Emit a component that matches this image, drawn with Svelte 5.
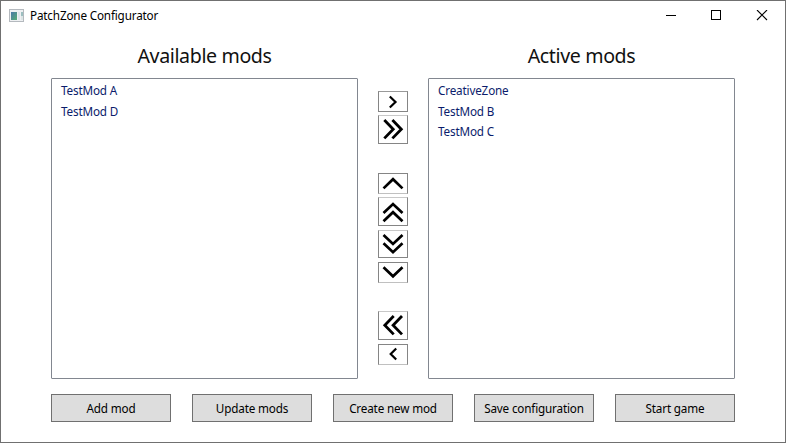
<script>
  const available = ['TestMod A', 'TestMod D'];
  const active = ['CreativeZone', 'TestMod B', 'TestMod C'];

  // Each mover: height, gap above, edge shade class, stroke width and chevron polylines
  const movers = [
    { label: 'Activate', h: 21, gap: 0, edge: 'softtop', w: 2.2, lines: ['11.8,5.5 17.5,11 11.8,16.5'] },
    { label: 'Activate all', h: 29, gap: 3, edge: 'lighttop', w: 2.8, lines: ['6.3,5 15.2,14.2 6.3,23.4', '14.4,5 23.3,14.2 14.4,23.4'] },
    { label: 'Move up', h: 21, gap: 29, edge: 'lightbottom', w: 2.7, lines: ['5.5,15.4 15,6.2 24.5,15.4'] },
    { label: 'Move to top', h: 29, gap: 3, edge: 'lighttop', w: 2.7, lines: ['5.5,16 15,7 24.5,16', '5.5,24.2 15,15.2 24.5,24.2'] },
    { label: 'Move to bottom', h: 28, gap: 4, edge: 'lighttop', w: 2.7, lines: ['5.5,5 15,14 24.5,5', '5.5,13.2 15,22.2 24.5,13.2'] },
    { label: 'Move down', h: 21, gap: 4, edge: 'lightbottom', w: 2.7, lines: ['5.5,5.3 15,14.3 24.5,5.3'] },
    { label: 'Deactivate all', h: 29, gap: 28, edge: 'lighttop', w: 2.8, lines: ['15.7,5 6.8,14.2 15.7,23.4', '24,5 15.1,14.2 24,23.4'] },
    { label: 'Deactivate', h: 21, gap: 4, edge: 'lightbottom', w: 2.2, lines: ['18.2,4.5 12.7,10 18.2,15.5'] }
  ];

  const actions = ['Add mod', 'Update mods', 'Create new mod', 'Save configuration', 'Start game'];
</script>

{#snippet list(title, items)}
  <section>
    <h2>{title}</h2>
    <ul>
      {#each items as item}<li>{item}</li>{/each}
    </ul>
  </section>
{/snippet}

<div class="window">
  <header>
    <svg class="logo" width="16" height="14" viewBox="0 0 16 14">
      <defs>
        <linearGradient id="pane" x1="0" y1="0" x2="1" y2="1">
          <stop offset="0" stop-color="#4a78a8" />
          <stop offset="1" stop-color="#57ad74" />
        </linearGradient>
      </defs>
      <rect x="0.5" y="0.5" width="14" height="12" fill="#eef0f2" stroke="#b4b9be" />
      <rect x="2" y="3" width="6" height="8" fill="url(#pane)" />
      <rect x="9" y="3" width="2" height="8" fill="#dfe4ea" />
      <rect x="12" y="3" width="2" height="4" fill="#9cbfc0" />
      <rect x="12" y="7" width="2" height="4" fill="#dce5e5" />
    </svg>
    <span class="title">PatchZone Configurator</span>
    <svg class="controls" width="102" height="12" viewBox="0 0 102 12" shape-rendering="crispEdges">
      <path d="M0 5.5h10M45.5 .5h9v9h-9z" fill="none" stroke="#000" />
      <path d="M91 0l10 10M101 0l-10 10" stroke="#000" stroke-width="1.1" shape-rendering="geometricPrecision" />
    </svg>
  </header>

  <main>
    {@render list('Available mods', available)}
    <nav>
      {#each movers as m}
        <button class="mover {m.edge}" aria-label={m.label} style="height:{m.h}px;margin-top:{m.gap}px">
          <svg width="30" height={m.h} viewBox="0 0 30 {m.h}">
            {#each m.lines as points}
              <polyline {points} fill="none" stroke="#000" stroke-width={m.w} />
            {/each}
          </svg>
        </button>
      {/each}
    </nav>
    {@render list('Active mods', active)}
  </main>

  <footer>
    {#each actions as text}<button class="action">{text}</button>{/each}
  </footer>
</div>

<style>
  .window {
    box-sizing: border-box;
    width: 786px;
    height: 443px;
    border: 1px solid #707070;
    background: #fff;
    color: #000;
    font: 11.7px/16px 'Segoe UI', 'Noto Sans', 'Open Sans', sans-serif;
    letter-spacing: -0.16px;
    overflow: hidden;
  }
  header {
    display: flex;
    align-items: center;
    height: 29px;
    padding: 0 17px 0 8px;
  }
  .logo { margin-right: 5px; }
  .title { flex: 1; padding-bottom: 1px; white-space: nowrap; }
  .controls { margin-top: 1px; }
  main {
    display: flex;
    gap: 20px;
    padding: 10px 50px 0;
    height: 339px;
  }
  section { width: 307px; }
  h2 {
    margin: 0;
    height: 38px;
    font-size: 19.6px;
    font-weight: 400;
    line-height: 32px;
    letter-spacing: -0.38px;
    text-align: center;
    color: #111;
  }
  ul {
    box-sizing: border-box;
    height: 301px;
    margin: 0;
    padding: 1px 9px;
    border: 1px solid #828790;
    border-radius: 1px;
    list-style: none;
    color: #0b1c6b;
  }
  li { height: 20.5px; line-height: 20px; }
  nav {
    display: flex;
    flex-direction: column;
    width: 30px;
    padding-top: 51px;
  }
  .mover {
    flex: none;
    box-sizing: border-box;
    width: 30px;
    padding: 0;
    border: 1px solid #858585;
    background: #fff;
  }
  .mover svg { display: block; margin: -1px; }
  .softtop { border-top-color: #999; }
  .lighttop { border-top-color: #c8c8c8; }
  .lightbottom { border-bottom-color: #c0c0c0; }
  footer {
    display: flex;
    gap: 21px;
    padding: 15px 50px 0;
  }
  .action {
    box-sizing: border-box;
    width: 120px;
    height: 28px;
    padding: 0 0 1px;
    border: 1px solid #707070;
    background: #ddd;
    color: #000;
    font: inherit;
    letter-spacing: inherit;
    white-space: nowrap;
  }
</style>
